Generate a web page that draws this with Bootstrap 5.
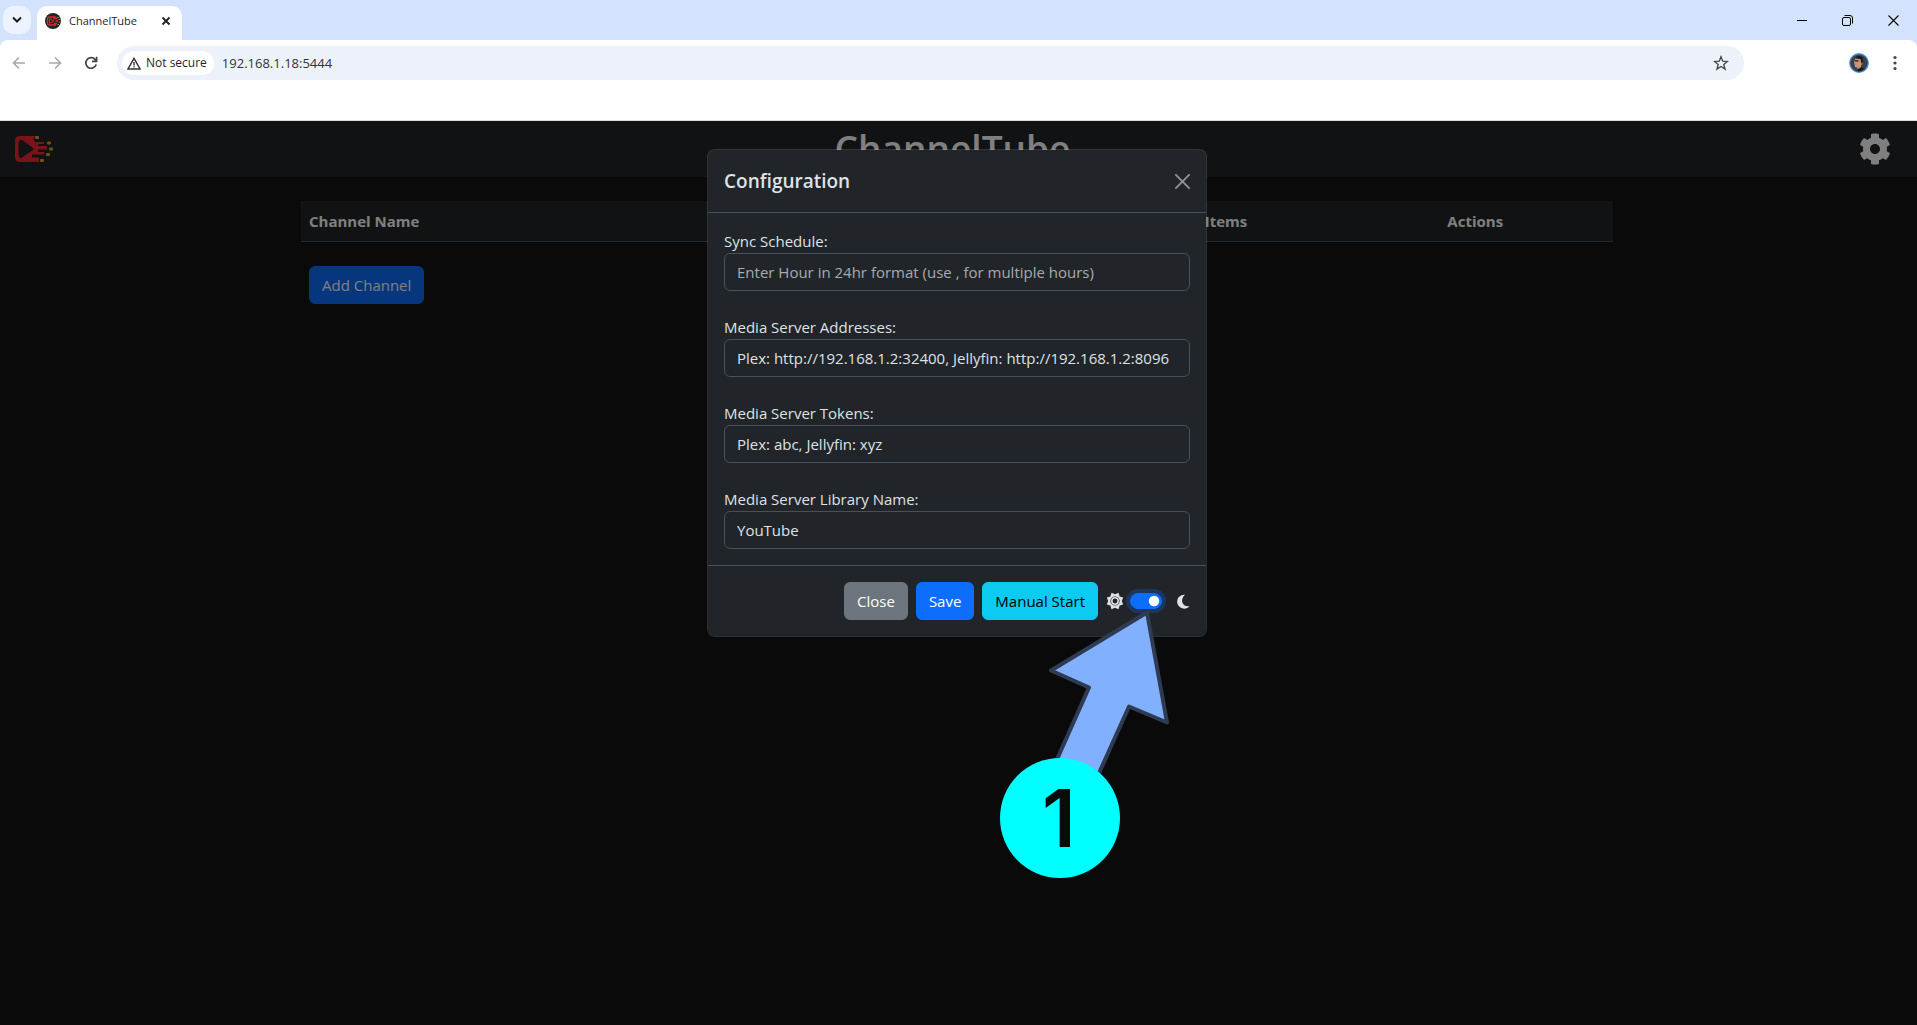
<!DOCTYPE html>
<html lang="en" data-bs-theme="dark">
<head>
<meta charset="utf-8">
<meta name="viewport" content="width=device-width, initial-scale=1">
<title>ChannelTube</title>
<link href="https://cdn.jsdelivr.net/npm/bootstrap@5.3.0/dist/css/bootstrap.min.css" rel="stylesheet">
<style>
  body { font-family: "Open Sans", "Noto Sans", sans-serif; font-size: 15px; line-height: 24px; background: #0b0b0b; }
  button, input { font-family: inherit; }
  svg { display: block; }

  /* Browser frame */
  .tab-strip { height: 40px; background: #d3e3fd; color: #1f1f1f; padding-left: 3px; }
  .tab-search { width: 28px; height: 28px; margin-top: 6px; border: 0; border-radius: 10px; background: #ecf2fe; color: #1f1f1f; }
  .page-tab { width: 145px; height: 34px; margin: 6px 0 0 6px; padding: 0 11px 5px 8px; border-radius: 10px 10px 0 0; background: #fff; font-size: 11px; }
  .plain-btn { border: 0; padding: 0; background: none; color: inherit; }
  .win-btns { width: 138px; }
  .tool-row { height: 46px; background: #fff; color: #474747; padding: 0 20px 0 12px; border-radius: 8px 8px 0 0; }
  .tool-wrap { background: #d3e3fd; }
  .nav-btns { width: 105px; gap: 22px; }
  .omni { height: 34px; border-radius: 17px; background: #edf1fa; padding: 0 15px 0 5px; margin-right: 105px; }
  .secure-chip { height: 24px; border-radius: 12px; background: #fff; color: #1f1f1f; font-size: 12px; padding: 0 7px 0 5px; gap: 5px; }
  .url-box { border: 0; background: none; color: #333; font-size: 13px; padding: 0 0 0 8px; outline: 0; }
  .mark-row { height: 35px; background: #fff; border-bottom: 1px solid #ddd; }

  /* Application */
  .app-bar { height: 56px; background: #212529; margin-right: -3px; padding: 0 26px 0 14px; }
  .app-bar h1 { font-size: 37px; line-height: 48px; font-weight: 600; color: #fff; }
  .app-bar a, .app-bar button { color: #fff; width: 40px; }
  .app-area { background: #151515; padding-right: 3px; --bs-body-color: #dee2e6; }
  .list-wrap { max-width: 1312px; margin-top: 24px; }
  .list-wrap th { background: #212529; color: #fff; border-color: #495057; }
  .col-items { width: 17%; }
  .col-actions { width: 21%; }
  .list-wrap .btn { margin: 24px 8px; color: #fff; }
  .btn, .form-control { font-size: 15px; line-height: 24px; }
  .form-control::placeholder { color: #a7abb0; }
  .shade { background: rgba(0, 0, 0, .5); }
  .modal-layer { padding-right: 3px; color: #dee2e6; }
  .modal-layer .form-control { color: #dee2e6; }
  .modal-layer .modal-content { color: #dee2e6; }
  .modal-layer .modal-title { font-size: 19px; line-height: 30px; font-weight: 600; color: #dee2e6; }
  .field + .field { margin-top: 24px; }
  .theme-switch { gap: 6px; }
  .theme-switch .moon { margin-left: 8px; }
  .theme-switch .form-check-input { width: 32px; height: 16px; margin: 0; }
  .theme-switch .form-check-input:checked { background-color: #0d6efd; border-color: #0d6efd; box-shadow: 0 0 0 4px rgba(13, 110, 253, .25);
    background-image: url("data:image/svg+xml,%3csvg xmlns='http://www.w3.org/2000/svg' viewBox='-4 -4 8 8'%3e%3ccircle r='3' fill='%23fff'/%3e%3c/svg%3e"); }

  /* Numbered callout pinned over the dialog's switch */
  .callout { left: 1000px; top: 488px; width: 180px; height: 272px; z-index: 1060; pointer-events: none; }
  .callout text { font-family: Inter, sans-serif; font-weight: 600; font-size: 80px; }
</style>
</head>
<body class="d-flex flex-column min-vh-100">

<header>
  <div class="tab-strip d-flex">
    <button class="tab-search d-flex align-items-center justify-content-center p-0" aria-label="Search tabs">
      <svg width="10" height="8" viewBox="0 0 10 8" fill="none" stroke="currentColor" stroke-width="2"><path d="M1 1.500l4 4 4-4"/></svg>
    </button>
    <div class="page-tab d-flex align-items-center">
      <svg width="16" height="16" viewBox="0 0 16 16"><circle cx="8" cy="8" r="8" fill="#20252a"/><path d="M4 4h6L9 5.500h3M4 4Q2.500 4 2.500 5.500v5Q2.500 12 4 12h7M9 10.500h3M10.500 8H13" fill="none" stroke="#e8222a" stroke-width="1.300"/><path d="M4.500 5.500 9 8l-4.500 2.500z" fill="none" stroke="#e8222a"/><path d="M12 4.500h1.500M13.500 6.500H15M14 9h1.200M12.500 11.500H14" stroke="#c58a25" stroke-width="1.200"/></svg>
      <span class="ms-2">ChannelTube</span>
      <button class="plain-btn ms-auto" aria-label="Close tab"><svg width="10" height="10" viewBox="0 0 10 10" stroke="currentColor" stroke-width="1.800"><path d="M1.500 1.500l7 7M8.500 1.500l-7 7"/></svg></button>
    </div>
    <div class="win-btns ms-auto d-flex align-items-center">
      <button class="plain-btn flex-fill d-flex justify-content-center" aria-label="Minimize"><svg width="10" height="10" viewBox="0 0 10 10" stroke="#000"><path d="M0 5.500h10"/></svg></button>
      <button class="plain-btn flex-fill d-flex justify-content-center" aria-label="Restore"><svg width="11" height="11" viewBox="0 0 11 11" fill="none" stroke="#000"><rect x=".5" y="2.500" width="8" height="8" rx="1.500"/><path d="M2.500.5H8Q10.500.5 10.500 3v5.500"/></svg></button>
      <button class="plain-btn flex-fill d-flex justify-content-center" aria-label="Close"><svg width="11" height="11" viewBox="0 0 11 11" stroke="#000" stroke-width="1.100"><path d="M.5.5l10 10M10.500.5l-10 10"/></svg></button>
    </div>
  </div>
  <div class="tool-wrap">
    <div class="tool-row d-flex align-items-center">
      <div class="nav-btns d-flex">
        <button class="plain-btn" aria-label="Back"><svg width="14" height="14" viewBox="0 0 14 14" fill="none" stroke="#a8a8a8" stroke-width="1.600"><path d="M13 7H2M7 1.500 1.500 7 7 12.500"/></svg></button>
        <button class="plain-btn" aria-label="Forward"><svg width="14" height="14" viewBox="0 0 14 14" fill="none" stroke="#a8a8a8" stroke-width="1.600"><path d="M1 7h11M7 1.500 12.500 7 7 12.500"/></svg></button>
        <button class="plain-btn" aria-label="Reload"><svg width="14" height="14" viewBox="0 0 14 14" fill="none" stroke="#404040" stroke-width="1.700"><path d="M12.200 8.500A5.300 5.300 0 1 1 11 3.300L12.500 5M12.600.8V5.300H8"/></svg></button>
      </div>
      <div class="omni d-flex align-items-center flex-fill">
        <button class="plain-btn secure-chip d-flex align-items-center fw-medium"><svg width="14" height="13" viewBox="0 0 14 13" fill="none" stroke="#333" stroke-width="1.400"><path d="M7 1.300 13 12H1zM7 5v3.500M7 9.300v1.300"/></svg>Not secure</button>
        <input class="url-box flex-fill" type="text" aria-label="Address" value="192.168.1.18:5444">
        <button class="plain-btn" aria-label="Bookmark"><svg width="16" height="16" viewBox="0 0 16 16" fill="none" stroke="#474747" stroke-width="1.400"><path d="M8 1.800l1.700 4.400 4.700.3-3.600 3 1.200 4.600L8 11.500l-4 2.600 1.200-4.600-3.600-3 4.700-.3z"/></svg></button>
      </div>
      <button class="plain-btn" aria-label="Profile"><svg width="20" height="20" viewBox="0 0 20 20"><circle cx="10" cy="10" r="9.300" fill="#3d4146" stroke="#4a9ae8" stroke-width="1.200"/><path d="M6.500 5 11 4.500l2 3 .5 3-1.500 2v2l-3.500 1.500-.5-1.500-2-.5-.5-3-.5-2z" fill="#c9957a"/><path d="M6 5.500Q7 2.500 11 3q3.500.5 3 5l-1 3-1-2-.5-3zM5.500 7.300h4v1.300H6zM8.500 17l4-3 2.500 1.500Q13 18.500 9 18.500z" fill="#1f1a1a"/></svg></button>
      <button class="plain-btn ms-4" aria-label="Menu"><svg width="4" height="16" viewBox="0 0 4 16" fill="#474747"><circle cx="2" cy="2.500" r="1.600"/><circle cx="2" cy="8" r="1.600"/><circle cx="2" cy="13.500" r="1.600"/></svg></button>
    </div>
  </div>
  <div class="mark-row"></div>
</header>

<div class="app-area position-relative flex-fill overflow-hidden">
  <nav class="app-bar d-flex align-items-center justify-content-between">
    <a href="#" aria-label="ChannelTube home">
      <svg width="40" height="28" viewBox="0 0 40 28"><path fill="#f3262f" fill-rule="evenodd" d="M6 1H21L19.500 4 21 7H30V9H24V11H33V14.500H24V17H30V19.500H18V22.500H25V27H6Q1 27 1 22V6Q1 1 6 1ZM6 5Q4.500 5.500 4.500 7.500V21Q5 24 8 22.500L19 15Q20 14 19 13L9 5.500Q7 4.500 6 5Z"/><g fill="#e0a528"><rect x="21" y="1" width="4" height="3" rx="1"/><rect x="33" y="6.500" width="4" height="3" rx="1"/><rect x="35" y="12.500" width="4" height="3" rx="1"/><rect x="32" y="18" width="4" height="3" rx="1"/><rect x="26" y="24" width="4" height="3" rx="1"/></g></svg>
    </a>
    <h1 class="m-0">ChannelTube</h1>
    <button class="plain-btn d-flex justify-content-end" aria-label="Settings">
      <svg width="32" height="32" viewBox="0 0 512 512" fill="currentColor"><path d="M487.400 315.700l-42.600-24.600c4.300-23.200 4.300-47 0-70.200l42.600-24.600c4.900-2.800 7.100-8.600 5.500-14-11.100-35.600-30-67.800-54.700-94.600-3.800-4.100-10-5.100-14.800-2.300L380.800 110c-17.900-15.400-38.500-27.300-60.800-35.100V25.800c0-5.600-3.900-10.500-9.400-11.700-36.700-8.200-74.300-7.800-109.200 0-5.500 1.200-9.400 6.100-9.400 11.700V75c-22.200 7.900-42.800 19.800-60.800 35.100L88.700 85.500c-4.900-2.800-11-1.900-14.800 2.300-24.700 26.700-43.600 58.900-54.700 94.600-1.700 5.400.6 11.200 5.500 14L67.300 221c-4.300 23.200-4.300 47 0 70.200l-42.600 24.600c-4.900 2.800-7.100 8.600-5.500 14 11.100 35.600 30 67.800 54.700 94.600 3.800 4.100 10 5.100 14.800 2.300l42.600-24.600c17.900 15.400 38.500 27.300 60.800 35.100v49.200c0 5.600 3.900 10.500 9.400 11.700 36.700 8.200 74.300 7.800 109.200 0 5.500-1.200 9.400-6.100 9.400-11.700v-49.200c22.200-7.900 42.800-19.800 60.800-35.100l42.600 24.600c4.900 2.800 11 1.900 14.800-2.300 24.700-26.700 43.600-58.900 54.700-94.600 1.500-5.500-.7-11.300-5.600-14.100zM256 336c-44.100 0-80-35.900-80-80s35.900-80 80-80 80 35.900 80 80-35.900 80-80 80z"/></svg>
    </button>
  </nav>

  <main class="list-wrap mx-auto">
    <table class="table mb-0">
      <thead>
        <tr><th scope="col">Channel Name</th><th class="col-items text-center" scope="col">Items</th><th class="col-actions text-center" scope="col">Actions</th></tr>
      </thead>
    </table>
    <button type="button" class="btn btn-primary">Add Channel</button>
  </main>

  <div class="shade position-absolute top-0 start-0 w-100 h-100"></div>

  <div class="modal-layer modal d-block position-absolute" role="dialog" aria-labelledby="config-title">
    <div class="modal-dialog">
      <div class="modal-content">
        <div class="modal-header">
          <h5 class="modal-title" id="config-title">Configuration</h5>
          <button type="button" class="btn-close" aria-label="Close"></button>
        </div>
        <div class="modal-body">
          <div class="field"><label class="d-block" for="sync">Sync Schedule:</label><input class="form-control" type="text" id="sync" placeholder="Enter Hour in 24hr format (use , for multiple hours)"></div>
          <div class="field"><label class="d-block" for="addr">Media Server Addresses:</label><input class="form-control" type="text" id="addr" value="Plex: http://192.168.1.2:32400, Jellyfin: http://192.168.1.2:8096"></div>
          <div class="field"><label class="d-block" for="tokens">Media Server Tokens:</label><input class="form-control" type="text" id="tokens" value="Plex: abc, Jellyfin: xyz"></div>
          <div class="field"><label class="d-block" for="library">Media Server Library Name:</label><input class="form-control" type="text" id="library" value="YouTube"></div>
        </div>
        <div class="modal-footer">
          <button type="button" class="btn btn-secondary">Close</button>
          <button type="button" class="btn btn-primary">Save</button>
          <button type="button" class="btn btn-info">Manual Start</button>
          <div class="theme-switch d-flex align-items-center">
            <svg width="18" height="18" viewBox="0 0 18 18" fill="none" stroke="#dee2e6"><path fill="#dee2e6" stroke="none" fill-rule="evenodd" d="M5.500.8 9 2.200 12.500.8 13.600 4.400 17.200 5.500 15.800 9 17.200 12.500 13.600 13.600 12.500 17.200 9 15.800 5.500 17.200 4.400 13.600.8 12.500 2.200 9 .8 5.500 4.400 4.400ZM9 4.400a4.600 4.600 0 1 0 0 9.200A4.600 4.600 0 0 0 9 4.400Z"/><circle cx="9" cy="9" r="3.200" stroke-width="1.500"/></svg>
            <div class="form-switch p-0 d-flex"><input class="form-check-input" type="checkbox" role="switch" id="theme" aria-label="Dark mode" checked></div>
            <svg class="moon" width="14" height="15" viewBox="0 0 14 15" fill="#dee2e6"><path d="M9 .7A7 7 0 1 0 13.500 12.200Q8.500 13 6.600 9 4.800 4 9 .7Z"/></svg>
          </div>
        </div>
      </div>
    </div>
  </div>

  <svg class="callout position-absolute" viewBox="1000 609 180 272" role="img" aria-label="Step 1">
    <path d="M1147 612.500 1051 670.500 1089 687.500 1046 784 1086 802 1129 706.500 1167 722.500Z" fill="#80b0ff" stroke="#2f3b52" stroke-width="4" stroke-linejoin="round"/>
    <circle cx="1060" cy="818" r="60" fill="#0ff"/>
    <text x="1059" y="847" text-anchor="middle" fill="#0b0b0b">1</text>
  </svg>
</div>

<script src="https://cdn.jsdelivr.net/npm/bootstrap@5.3.0/dist/js/bootstrap.bundle.min.js"></script>
</body>
</html>
